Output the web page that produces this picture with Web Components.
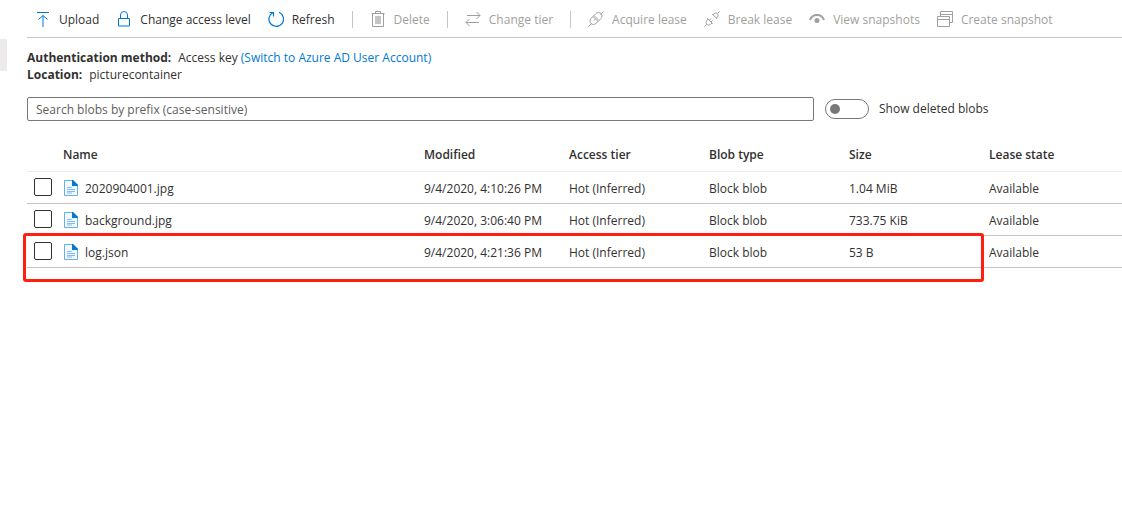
<!DOCTYPE html>
<html lang="en">
<head>
<meta charset="utf-8">
<title>picturecontainer</title>
<style>
body { margin: 0; background: #fff; color: #323130; font: 12px/17px "Open Sans", "Noto Sans", sans-serif; }
</style>
</head>
<body>
<blob-page></blob-page>
<script>
const icons = {
  upload: '<path d="M2 1.500h12M8 16V4.500M3.500 8.500l4.500-4 4.500 4"/>',
  lock: '<path d="M2.500 7.500h11v7.500h-11zM4.500 7.500V4a3.500 3.500 0 0 1 7 0v3.500"/>',
  refresh: '<path d="M11 1.300A7.300 7.300 0 1 1 5 1.500M1.500 1.500H5.500V5.500" stroke-width="1.200"/>',
  trash: '<path d="M1.500 2.500h13M5.500 2.500v-2h5v2M2.500 2.500v13h11v-13"/><path d="M5 5h6v8H5z" fill="currentColor" stroke="none" opacity=".6"/>',
  swap: '<path d="M2 4.500h13M11.500 1l3.500 3.500L11.500 8M14 11.500H1M4.500 8 1 11.500 4.500 15"/>',
  plug: '<path d="M.500 15.500l3-3M12.500 3.500l3-3"/><path d="M5 5.500 3.200 7.400c-1.600 1.600-1.500 3.800-.200 5.100s3.500 1.400 5.100-.200L10 10.500zM6 4.500l1.800-1.800c1.600-1.600 3.900-1.500 5.200-.200s1.400 3.600-.200 5.200L11 9.500zM5 5.500l1-1M10 10.500l1-1M6 9.500l1.500-1.500"/>',
  unplug: '<path d="M.500 15.500l2.200-2.200M13.300 2.700l2.200-2.200"/><path d="M3.300 7.300 8.700 12.700M4 8l-1.100 1.300c-1.200 1.300-1.100 2.800-.100 3.900s2.600 1.100 3.900 0L8 12M8.200 3l5 5M9 3.700l1.100-1c1.200-1.100 2.300-1 3.200 0s1.100 2.200 0 3.300l-1 1M5.300 9.300l1.800-1.800M7 11l1.800-1.800"/>',
  eye: '<path d="M1 9C2.200 5.500 4.800 4 8 4s5.800 1.500 7 5" stroke-width="2"/><circle cx="8" cy="9.500" r="2.500" fill="currentColor" stroke="none"/>',
  windows: '<path d="M.500 5.500h12v10H.500zM.500 8.500h12M3.500 5.500v-5h12v11h-3M3.500 3.500h12"/>'
};
const define = (name, html) => customElements.define(name, class extends HTMLElement {
  constructor() {
    super();
    const t = document.createElement('template');
    t.innerHTML = typeof html === 'function' ? html(this) : html;
    this.attachShadow({ mode: 'open' }).append(t.content.cloneNode(true));
  }
});

define('tool-button', el => `
<style>
:host { display: block; flex: none; }
button { display: flex; align-items: center; gap: 8px; height: 36px; padding: 0 8px; border: 0; background: none; font: inherit; color: inherit; white-space: nowrap; }
button:disabled { color: #a19f9d; }
svg { width: 16px; height: 16px; color: #0078d4; fill: none; stroke: currentColor; }
button:disabled svg { color: inherit; }
</style>
<button type="button" ${el.hasAttribute('disabled') ? 'disabled' : ''}>
<svg viewBox="0 0 16 16" aria-hidden="true">${icons[el.getAttribute('icon')]}</svg><slot></slot></button>`);

define('tool-bar', `
<style>
:host { display: flex; align-items: center; gap: 1px; padding-top: 1px; border-bottom: 1px solid #c8c6c4; }
::slotted(hr) { width: 1px; height: 17px; margin: 0 8px; border: 0; background: #c8c6c4; flex: none; }
</style><slot></slot>`);

define('container-info', `
<style>
:host { display: block; margin-top: 11px; }
dl { margin: 0; }
div { display: flex; gap: 7px; }
dt { font-weight: 700; }
dd { margin: 0; }
a { color: #0078d4; text-decoration: none; }
</style>
<dl><div><dt>Authentication method:</dt><dd>Access key <a href="#switch">(Switch to Azure AD User Account)</a></dd></div>
<div><dt>Location:</dt><dd>picturecontainer</dd></div></dl>`);

define('blob-filter', `
<style>
:host { display: flex; align-items: center; margin-top: 14px; }
.search { flex: 1; min-width: 0; box-sizing: border-box; height: 24px; padding: 0 8px; border: 1px solid #7a7876; border-radius: 2px; font: inherit; color: inherit; }
.search::placeholder { color: #605e5c; opacity: 1; }
.toggle { appearance: none; flex: none; box-sizing: border-box; width: 44px; height: 20px; margin: 0 10px 0 11px; border: 1px solid #7a7876; border-radius: 10px; display: flex; align-items: center; padding: 0 4px; }
.toggle::before { content: ""; width: 10px; height: 10px; border-radius: 50%; background: #7a7876; }
.toggle:checked { justify-content: flex-end; }
label { flex: none; width: 243px; padding-bottom: 2px; white-space: nowrap; }
</style>
<input class="search" type="text" aria-label="Search blobs by prefix" placeholder="Search blobs by prefix (case-sensitive)">
<input class="toggle" type="checkbox" role="switch" id="deleted"><label for="deleted">Show deleted blobs</label>`);

const blobs = [
  ['2020904001.jpg', '9/4/2020, 4:10:26 PM', '1.04 MiB'],
  ['background.jpg', '9/4/2020, 3:06:40 PM', '733.75 KiB'],
  ['log.json', '9/4/2020, 4:21:36 PM', '53 B']
];
define('blob-table', `
<style>
:host { display: block; position: relative; margin-top: 18px; }
table { width: 100%; table-layout: fixed; border-collapse: separate; border-spacing: 0; }
th, td { box-sizing: border-box; height: 32px; padding: 2px 0 0; text-align: left; font-weight: 400; white-space: nowrap; border-bottom: 1px solid #c8c6c4; }
th { height: 33px; padding: 0 0 2px; font-weight: 600; border-bottom-color: #edebe9; }
td.pick { padding: 0 0 2px; }
.check { width: 36px; }
.date { width: 145px; }
.mid { width: 140px; }
.last { width: 133px; }
input { appearance: none; display: block; box-sizing: border-box; width: 18px; height: 18px; margin: 0 0 0 7px; border: 1px solid #323130; border-radius: 2px; }
.file { display: flex; align-items: center; gap: 6px; }
svg { width: 16px; height: 16px; margin-bottom: 1px; }
.mark { position: absolute; left: -4px; right: 138px; bottom: -14px; height: 49px; box-sizing: border-box; border: 3px solid #ff1e10; border-radius: 3px; pointer-events: none; }
</style>
<table>
<thead><tr><th class="check"></th><th>Name</th><th class="date">Modified</th><th class="mid">Access tier</th><th class="mid">Blob type</th><th class="mid">Size</th><th class="last">Lease state</th></tr></thead>
<tbody>${blobs.map(([n, d, s]) => `<tr><td class="pick"><input type="checkbox" aria-label="Select ${n}"></td><td><div class="file"><svg viewBox="0 0 16 16" aria-hidden="true"><path d="M1.500.500h8.500l4.500 4.500v10.500h-13z" fill="#f3f8fe" stroke="#69afe5"/><path d="M9 0h1l5 5v1H9z" fill="#0078d4"/><path d="M4 7.500h4.500M4 9.500h8M4 11.500h8M4 13h5" stroke="#83b9f9"/></svg>${n}</div></td><td>${d}</td><td>Hot (Inferred)</td><td>Block blob</td><td>${s}</td><td>Available</td></tr>`).join('')}</tbody>
</table>
<div class="mark"></div>`);

define('blob-page', `
<style>
:host { display: flex; min-height: 100vh; overflow: hidden; }
aside { flex: none; width: 7px; height: 32px; margin-top: 39px; background: #edebe9; }
main { flex: 1; min-width: 0; padding-left: 20px; }
</style>
<aside></aside>
<main>
<tool-bar>
<tool-button icon="upload">Upload</tool-button>
<tool-button icon="lock">Change access level</tool-button>
<tool-button icon="refresh">Refresh</tool-button>
<hr>
<tool-button icon="trash" disabled>Delete</tool-button>
<hr>
<tool-button icon="swap" disabled>Change tier</tool-button>
<hr>
<tool-button icon="plug" disabled>Acquire lease</tool-button>
<tool-button icon="unplug" disabled>Break lease</tool-button>
<tool-button icon="eye" disabled>View snapshots</tool-button>
<tool-button icon="windows" disabled>Create snapshot</tool-button>
</tool-bar>
<container-info></container-info>
<blob-filter></blob-filter>
<blob-table></blob-table>
</main>`);
</script>
</body>
</html>
